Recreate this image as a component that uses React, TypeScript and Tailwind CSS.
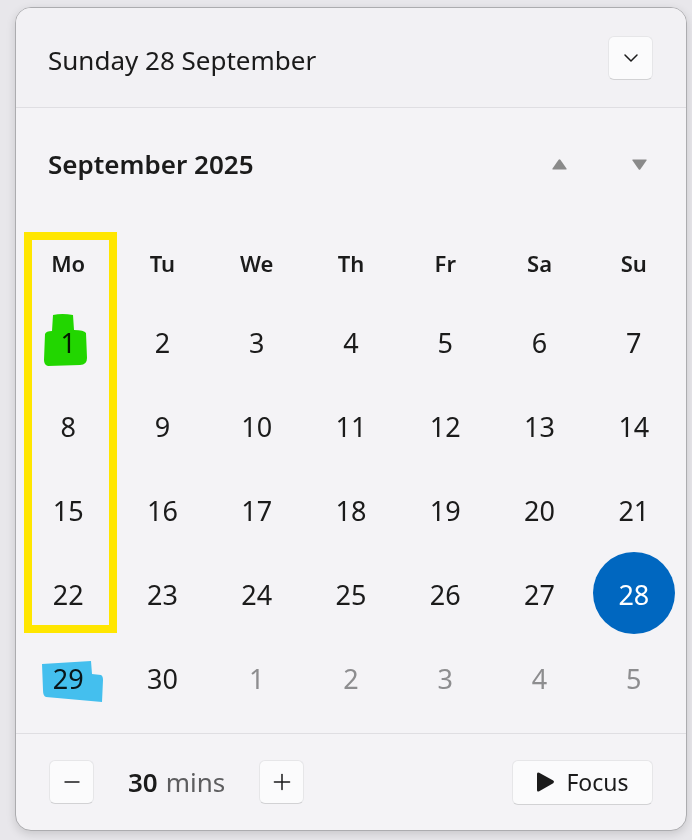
import { ChevronDown, Minus, Plus } from "lucide-react";

type Day = { n: number; muted?: boolean };

const WEEKDAYS = ["Mo", "Tu", "We", "Th", "Fr", "Sa", "Su"];

const DAYS: Day[] = [
  ...Array.from({ length: 30 }, (_, i) => ({ n: i + 1 })),
  ...[1, 2, 3, 4, 5].map((n) => ({ n, muted: true })),
];

const SELECTED = 28;

function Triangle({ down }: { down?: boolean }) {
  return (
    <svg width="17" height="13" viewBox="0 0 17 13" className="text-[#8a8a8a]">
      {down ? (
        <path d="M2 1.5 H15 Q16.2 1.5 15.5 2.6 L9.4 11.2 Q8.5 12.3 7.6 11.2 L1.5 2.6 Q0.8 1.5 2 1.5 Z" fill="currentColor" />
      ) : (
        <path d="M2 11.5 H15 Q16.2 11.5 15.5 10.4 L9.4 1.8 Q8.5 0.7 7.6 1.8 L1.5 10.4 Q0.8 11.5 2 11.5 Z" fill="currentColor" />
      )}
    </svg>
  );
}

export default function App() {
  return (
    <div className="relative h-[840px] w-[692px] overflow-hidden bg-[#e8e7eb] pl-[15px] pt-[7px] font-['Noto_Sans',sans-serif] text-[#1b1b1b]">
      <div className="flex h-[824px] w-[672px] flex-col overflow-hidden rounded-[16px] border border-[#acacaf] bg-[#f4f3f6] shadow-[0_3px_10px_rgba(0,0,0,0.14)]">
        {/* Header */}
        <div className="flex h-[100px] shrink-0 items-center justify-between border-b border-[#dfdee2] bg-[#f2f1f4] pl-[32px] pr-[33px]">
          <span className="pt-[4px] text-[26px] leading-none">Sunday 28 September</span>
          <button className="flex h-[44px] w-[45px] items-center justify-center rounded-[6px] border border-[#e6e6e8] border-b-[#d2d2d4] bg-[#fbfbfc]">
            <ChevronDown className="h-[24px] w-[24px]" strokeWidth={1.5} />
          </button>
        </div>

        {/* Calendar */}
        <div className="flex-1">
          <div className="mt-[36px] flex h-[40px] items-center pl-[32px] pr-[27px]">
            <span className="text-[26px] font-semibold leading-none">September 2025</span>
            <div className="ml-auto flex items-center gap-[40px]">
              <button className="flex h-[40px] w-[40px] items-center justify-center">
                <Triangle />
              </button>
              <button className="flex h-[40px] w-[40px] items-center justify-center">
                <Triangle down />
              </button>
            </div>
          </div>

          <div className="ml-[5px] mt-[59px] grid h-[40px] w-[660px] grid-cols-7 items-center text-center text-[22px] font-semibold">
            {WEEKDAYS.map((d) => (
              <span key={d}>{d}</span>
            ))}
          </div>

          <div className="ml-[5px] mt-[18px] grid w-[660px] grid-cols-7 auto-rows-[84px] text-[27px]">
            {DAYS.map((d, i) => (
              <div key={i} className="flex items-center justify-center">
                {d.n === SELECTED && !d.muted ? (
                  <span className="-mt-[4px] flex h-[82px] w-[82px] items-center justify-center rounded-full bg-[#0067c0] pt-[4px] text-white">
                    {d.n}
                  </span>
                ) : (
                  <span className={d.muted ? "text-[#8d8d8f]" : ""}>{d.n}</span>
                )}
              </div>
            ))}
          </div>
        </div>

        {/* Footer */}
        <div className="flex h-[97px] shrink-0 items-center border-t border-[#dfdee2] px-[33px]">
          <button className="flex h-[44px] w-[45px] items-center justify-center rounded-[6px] border border-[#e6e6e8] border-b-[#d2d2d4] bg-[#fbfbfc]">
            <Minus className="h-[24px] w-[24px]" strokeWidth={1.4} />
          </button>
          <div className="ml-[34px] w-[131px] text-[26px] leading-none">
            <span className="font-semibold">30</span>
            <span className="ml-[8px] text-[#5d5d5f]">mins</span>
          </div>
          <button className="flex h-[44px] w-[45px] items-center justify-center rounded-[6px] border border-[#e6e6e8] border-b-[#d2d2d4] bg-[#fbfbfc]">
            <Plus className="h-[26px] w-[26px]" strokeWidth={1.4} />
          </button>
          <button className="ml-auto flex h-[45px] w-[141px] items-center justify-center gap-[11px] rounded-[6px] border border-[#e6e6e8] border-b-[#d2d2d4] bg-[#fbfbfc] text-[23px]">
            <svg width="19" height="22" viewBox="0 0 19 22">
              <path d="M1 3 Q1 0.6 3.2 1.8 L17.2 9.6 Q19 10.9 17.2 12.2 L3.2 20.2 Q1 21.4 1 19 Z" fill="#1b1b1b" />
            </svg>
            <span className="leading-none">Focus</span>
          </button>
        </div>
      </div>

      {/* Hand-drawn annotations */}
      <div className="pointer-events-none absolute left-[24px] top-[232px] h-[401px] w-[93px] border-[8px] border-[#ffe600]" />
      <svg
        className="pointer-events-none absolute left-0 top-0 mix-blend-multiply"
        width="692"
        height="840"
        viewBox="0 0 692 840"
      >
        <path
          d="M53 315 Q62 313 73 315 L74 330 Q84 330 86 333 L87 358 Q87 365 80 365 L48 366 Q44 365 44 360 L45 334 Q46 331 52 331 Z"
          fill="#23e100"
        />
        <path
          d="M42 664 L91 661 L92 674 L101 675 Q103 676 103 680 L102 702 L46 697 Q43 696 43 690 Z"
          fill="#47c9f7"
        />
      </svg>
    </div>
  );
}
